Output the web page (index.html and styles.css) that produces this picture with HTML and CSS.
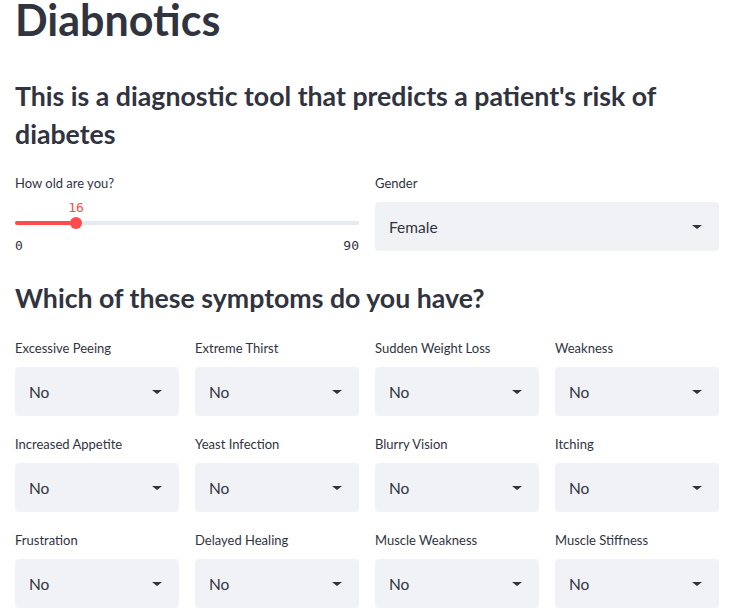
FILE: index.html
```html
<!DOCTYPE html>
<html>
<head>
<meta charset="utf-8">
<link rel="stylesheet" href="styles.css">
</head>
<body>
<div class="main">
  <h1 class="title">Diabnotics</h1>
  <h2 class="subtitle">This is a diagnostic tool that predicts a patient's risk of diabetes</h2>
  <div class="row two">
    <div class="field">
      <label class="label">How old are you?</label>
      <div class="slider">
        <div class="slider-value-row"><span class="slider-value" style="left: 61px">16</span></div>
        <div class="track">
          <div class="fill" style="width: 61px"></div>
          <div class="thumb" style="left: 61px"></div>
        </div>
        <div class="minmax"><span>0</span><span>90</span></div>
      </div>
    </div>
    <div class="field">
      <label class="label">Gender</label>
      <div class="select"><span>Female</span><span class="caret"></span></div>
    </div>
  </div>
  <h2 class="section">Which of these symptoms do you have?</h2>
  <div class="grid">
    <div class="field"><label class="label">Excessive Peeing</label><div class="select"><span>No</span><span class="caret"></span></div></div>
    <div class="field"><label class="label">Extreme Thirst</label><div class="select"><span>No</span><span class="caret"></span></div></div>
    <div class="field"><label class="label">Sudden Weight Loss</label><div class="select"><span>No</span><span class="caret"></span></div></div>
    <div class="field"><label class="label">Weakness</label><div class="select"><span>No</span><span class="caret"></span></div></div>
    <div class="field"><label class="label">Increased Appetite</label><div class="select"><span>No</span><span class="caret"></span></div></div>
    <div class="field"><label class="label">Yeast Infection</label><div class="select"><span>No</span><span class="caret"></span></div></div>
    <div class="field"><label class="label">Blurry Vision</label><div class="select"><span>No</span><span class="caret"></span></div></div>
    <div class="field"><label class="label">Itching</label><div class="select"><span>No</span><span class="caret"></span></div></div>
    <div class="field"><label class="label">Frustration</label><div class="select"><span>No</span><span class="caret"></span></div></div>
    <div class="field"><label class="label">Delayed Healing</label><div class="select"><span>No</span><span class="caret"></span></div></div>
    <div class="field"><label class="label">Muscle Weakness</label><div class="select"><span>No</span><span class="caret"></span></div></div>
    <div class="field"><label class="label">Muscle Stiffness</label><div class="select"><span>No</span><span class="caret"></span></div></div>
  </div>
</div>
</body>
</html>
```
FILE: styles.css
```css
html, body {
  margin: 0;
  padding: 0;
  background: #ffffff;
}
body {
  font-family: "Lato", "Noto Sans", sans-serif;
  color: #31333F;
  overflow: hidden;
}
.main {
  width: 704px;
  padding: 0 29px 0 15px;
}
.title {
  font-size: 43px;
  font-weight: 700;
  line-height: 40px;
  height: 40px;
  margin: 0;
  padding: 0;
}
.subtitle {
  font-size: 26.7px;
  font-weight: 700;
  line-height: 38px;
  margin: 37px 0 0 0;
}
.row.two {
  display: flex;
  gap: 16px;
  margin-top: 20px;
}
.row.two .field {
  flex: 1;
}
.field {
  display: flex;
  flex-direction: column;
}
.label {
  font-size: 13px;
  line-height: 20px;
  height: 20px;
  margin-bottom: 9px;
}
.slider {
  display: flex;
  flex-direction: column;
}
.slider-value-row {
  position: relative;
  height: 14px;
}
.slider-value {
  position: absolute;
  top: -2px;
  transform: translateX(-50%);
  font-family: "DejaVu Sans Mono", monospace;
  font-size: 13px;
  color: #FF4B4B;
}
.track {
  position: relative;
  height: 4px;
  margin-top: 5px;
  background: #E6EAF1;
  border-radius: 2px;
}
.fill {
  height: 4px;
  background: #FF4B4B;
  border-radius: 2px;
}
.thumb {
  position: absolute;
  top: -4px;
  width: 12px;
  height: 12px;
  margin-left: -6px;
  border-radius: 50%;
  background: #FF4B4B;
}
.minmax {
  display: flex;
  justify-content: space-between;
  margin-top: 13px;
  font-family: "DejaVu Sans Mono", monospace;
  font-size: 13px;
  color: #31333F;
}
.select {
  display: flex;
  align-items: center;
  justify-content: space-between;
  height: 49px;
  box-sizing: border-box;
  padding: 0 17px 0 14px;
  background: #F0F2F6;
  border-radius: 4px;
  font-size: 15.5px;
}
.caret {
  width: 0;
  height: 0;
  border-left: 5px solid transparent;
  border-right: 5px solid transparent;
  border-top: 4px solid #31333F;
}
.section {
  font-size: 26.7px;
  font-weight: 700;
  line-height: 38px;
  margin: 26px 0 0 0;
}
.grid {
  display: grid;
  grid-template-columns: repeat(4, 1fr);
  column-gap: 16px;
  row-gap: 18px;
  margin-top: 21px;
}
```
